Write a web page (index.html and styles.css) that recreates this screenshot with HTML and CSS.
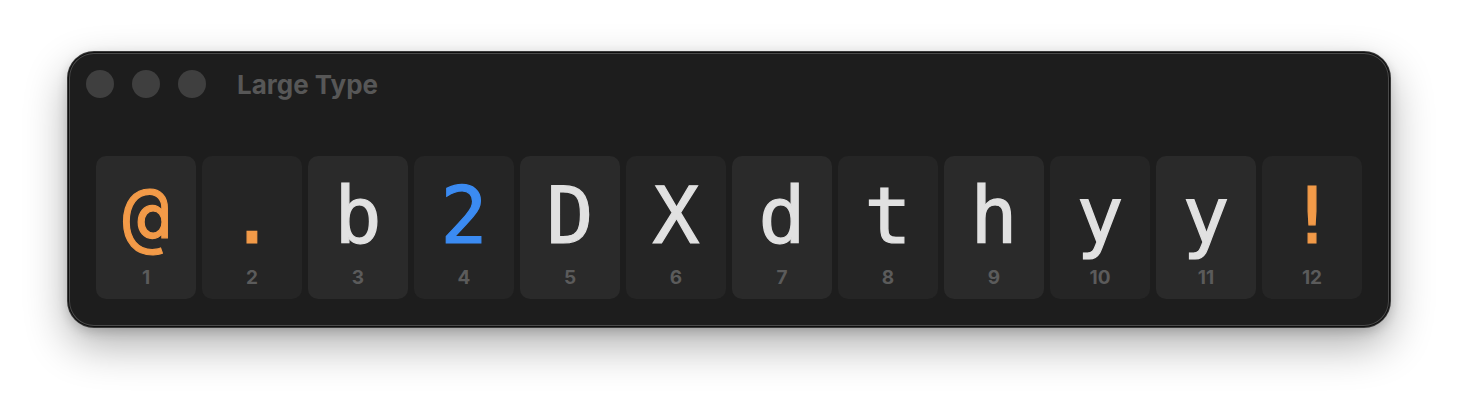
FILE: index.html
```html
<!DOCTYPE html>
<html lang="en">
<head>
    <meta charset="UTF-8">
    <meta name="viewport" content="width=device-width, initial-scale=1.0">
    <title>Large Type</title>
    <link rel="stylesheet" href="styles.css">
</head>
<body>
    <div class="ventana">
        <div class="barra">
            <span class="semaforo"></span>
            <span class="semaforo"></span>
            <span class="semaforo"></span>
            <span class="titulo">Large Type</span>
        </div>

        <div class="letras">
            <div class="celda"><span class="glifo naranja">@</span><span class="num">1</span></div>
            <div class="celda"><span class="glifo naranja">.</span><span class="num">2</span></div>
            <div class="celda"><span class="glifo">b</span><span class="num">3</span></div>
            <div class="celda"><span class="glifo azul">2</span><span class="num">4</span></div>
            <div class="celda"><span class="glifo">D</span><span class="num">5</span></div>
            <div class="celda"><span class="glifo">X</span><span class="num">6</span></div>
            <div class="celda"><span class="glifo">d</span><span class="num">7</span></div>
            <div class="celda"><span class="glifo">t</span><span class="num">8</span></div>
            <div class="celda"><span class="glifo">h</span><span class="num">9</span></div>
            <div class="celda"><span class="glifo">y</span><span class="num">10</span></div>
            <div class="celda"><span class="glifo">y</span><span class="num">11</span></div>
            <div class="celda"><span class="glifo naranja">!</span><span class="num">12</span></div>
        </div>
    </div>
</body>
</html>
```

FILE: styles.css
```css
html {
    background-color: white;
}

body {
    margin: 0;
    padding-top: 52px;
    min-height: 100vh;
    box-sizing: border-box;
    font-family: 'Inter', 'Liberation Sans', sans-serif;
    display: flex;
    justify-content: center;
    align-items: flex-start;
}

.ventana {
    width: 1322px;
    height: 275px;
    box-sizing: border-box;
    background-color: #1d1d1d;
    border-radius: 26px;
    padding: 0 28px 28px;
    box-shadow:
        0 0 0 1px #3a3a3a,
        inset 0 0 0 1px #0e0e0e,
        inset 0 0 0 2px #4a4a4a,
        0 18px 44px rgba(0, 0, 0, 0.32),
        0 4px 12px rgba(0, 0, 0, 0.18);
}

.barra {
    display: flex;
    align-items: center;
    gap: 18px;
    height: 64px;
    margin-left: -10px;
    margin-bottom: 40px;
}

.semaforo {
    width: 28px;
    height: 28px;
    border-radius: 50%;
    background-color: #3f3f3f;
}

.titulo {
    margin-left: 13px;
    font-size: 26px;
    font-weight: 700;
    color: #575757;
}

.letras {
    display: flex;
    gap: 6px;
}

.celda {
    width: 100px;
    height: 143px;
    box-sizing: border-box;
    padding-top: 21px;
    border-radius: 10px;
    background-color: #2a2a2a;
    display: flex;
    flex-direction: column;
    align-items: center;
}

/* las pares un poco mas oscuras */
.celda:nth-child(even) {
    background-color: #252525;
}

.glifo {
    font-family: 'DejaVu Sans Mono', monospace;
    font-size: 78px;
    line-height: 78px;
    height: 78px;
    color: #e1e1e1;
    -webkit-text-stroke: 1.2px currentColor;
}

.naranja {
    color: #f29a48;
}

.azul {
    color: #3b8bf2;
}

.num {
    margin-top: 13px;
    font-size: 19px;
    line-height: 20px;
    font-weight: 700;
    color: #5b5b5b;
}
```
